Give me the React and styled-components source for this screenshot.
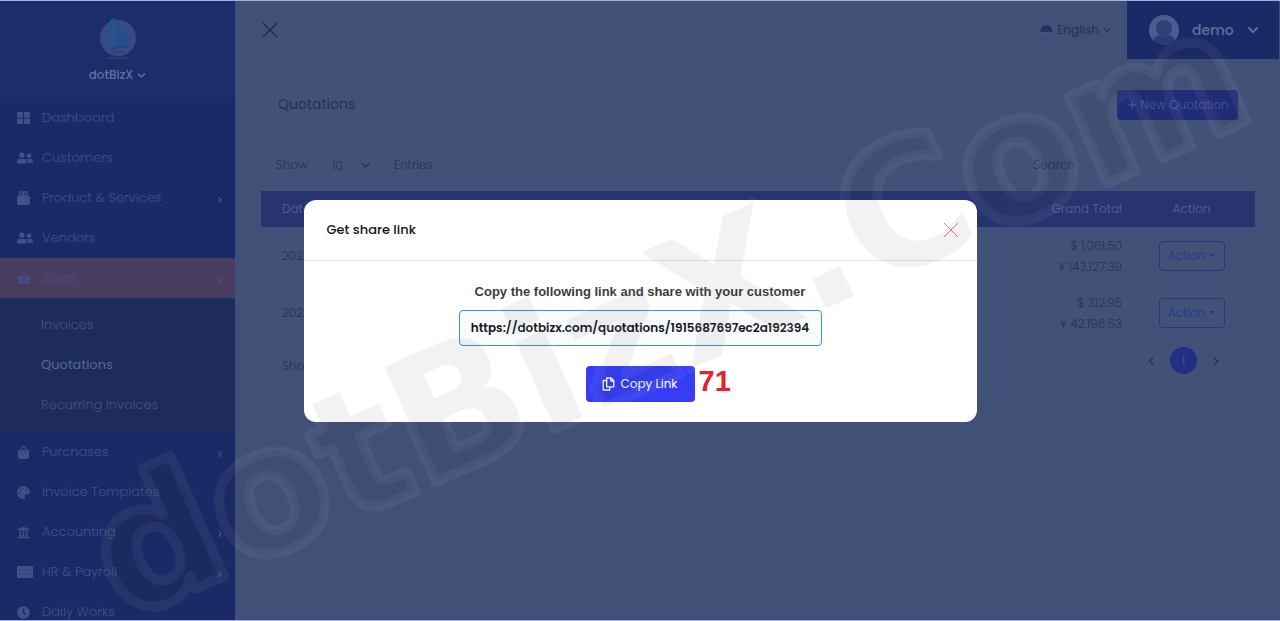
import React from 'react'
import styled, { createGlobalStyle, css } from 'styled-components'
import { FaUserFriends, FaShoppingBasket, FaPalette, FaUniversity, FaClock, FaChevronDown } from 'react-icons/fa'
import { FaBagShopping } from 'react-icons/fa6'
import { FiChevronRight, FiChevronDown, FiChevronLeft, FiPlus } from 'react-icons/fi'

const GlobalStyle = createGlobalStyle`
    * {
        box-sizing: border-box;
    }

    body {
        margin: 0;
        background: #405077;
        font-family: Poppins, Inter, "Liberation Sans", sans-serif;
        font-size: 13px;
        color: #25315c;
    }

    button, input, select {
        font: inherit;
        color: inherit;
    }

    a {
        color: inherit;
        text-decoration: none;
    }
`

const Page = styled.div`
    display: flex;
    height: 100vh;
    overflow: hidden;
    border-top: 1px solid #9db3e0;
    border-bottom: 1px solid #9db3e0;
`

const Sidebar = styled.aside`
    flex: 0 0 235px;
    background: #1b2a66;
    color: #415088;
`

const Brand = styled.div`
    display: flex;
    flex-direction: column;
    align-items: center;
    gap: 5px;
    height: 97px;
    padding-top: 17px;
    background: #1d2d6b;
`

const BrandButton = styled.button`
    display: flex;
    align-items: center;
    gap: 4px;
    padding: 0;
    border: 0;
    background: none;
    color: #5f71a0;
    font-size: 12px;
    font-weight: 500;
    line-height: 20px;
`

const NavLink = styled.a`
    display: flex;
    align-items: center;
    height: 40px;
    padding: 0 10px 0 17px;
    font-weight: 300;
    ${({ $active }) => $active && css`
        background: #493e60;
    `}
`

const NavIcon = styled.span`
    display: flex;
    width: 25px;
`

const NavArrow = styled.span`
    display: flex;
    margin-left: auto;
    padding-top: 4px;
`

const SubMenu = styled.div`
    padding: 7px 0;
    background: #1e2c5c;
`

const SubLink = styled.a`
    display: flex;
    align-items: center;
    height: 40px;
    padding-left: 41px;
    color: ${({ $active }) => $active ? '#56689a' : '#43537f'};
    font-weight: ${({ $active }) => $active ? 400 : 300};
`

const Main = styled.main`
    flex: 1;
    min-width: 0;
    margin-right: 1px;
`

const TopBar = styled.header`
    display: flex;
    align-items: center;
    height: 58px;
    padding-left: 27px;
`

const PlainButton = styled.button`
    display: flex;
    align-items: center;
    padding: 0;
    border: 0;
    background: none;
`

const Language = styled(PlainButton)`
    gap: 4px;
    margin-left: auto;
    margin-right: 16px;
    font-size: 12px;
`

const UserMenu = styled(PlainButton)`
    gap: 13px;
    align-self: stretch;
    width: 152px;
    padding-left: 22px;
    background: #1b2a66;
    color: #5f71a0;
    font-size: 14px;
    font-weight: 500;
`

const Card = styled.section`
    margin: 14px 24px 0 26px;
    padding-bottom: 18px;
    background: #415178;
`

const CardHeader = styled.div`
    display: flex;
    align-items: center;
    justify-content: space-between;
    height: 63px;
    padding: 0 17px;
`

const Title = styled.h1`
    margin: 0;
    font-size: 14px;
    font-weight: 400;
`

const NewButton = styled.button`
    display: flex;
    align-items: center;
    justify-content: center;
    gap: 2px;
    width: 121px;
    height: 30px;
    padding: 0;
    border: 0;
    border-radius: 4px;
    background: #202c78;
    color: #4b5b98;
    font-size: 12px;
    font-weight: 300;
`

const Controls = styled.div`
    display: flex;
    align-items: center;
    height: 55px;
    padding: 3px 16px 0 15px;
    font-size: 12px;
    font-weight: 300;
`

const PageSize = styled.label`
    display: flex;
    align-items: center;
    gap: 24px;
`

const SelectWrap = styled.span`
    display: grid;
    grid-template-columns: 38px;
    align-items: center;

    select, svg {
        grid-area: 1 / 1;
    }

    select {
        appearance: none;
        border: 0;
        padding: 0;
        background: none;
    }

    svg {
        justify-self: end;
        pointer-events: none;
    }
`

const Search = styled.label`
    display: flex;
    align-items: center;
    gap: 8px;
    margin-left: auto;

    input {
        width: 156px;
        height: 30px;
        border: 0;
        background: none;
    }
`

const Table = styled.table`
    width: 100%;
    border-collapse: collapse;
    font-size: 12px;
    font-weight: 300;

    th {
        height: 36px;
        padding: 0 6px;
        background: #27346f;
        color: #4b5b94;
        font-weight: 400;
        text-align: left;
    }

    td {
        height: 57px;
        padding: 0 6px;
        line-height: 21px;
    }

    th:first-child, td:first-child {
        padding-left: 21px;
    }

    th.total, td.total {
        text-align: right;
    }

    th.action, td.action {
        width: 127px;
        text-align: center;
    }
`

const ActionButton = styled.button`
    display: inline-flex;
    align-items: center;
    justify-content: center;
    gap: 4px;
    width: 66px;
    height: 30px;
    padding: 0;
    border: 1px solid #2a3874;
    border-radius: 4px;
    background: none;
    color: #27378a;

    &:after {
        content: "";
        border: 3px solid transparent;
        border-top-color: currentColor;
        border-bottom: 0;
    }
`

const TableFooter = styled.div`
    display: flex;
    align-items: start;
    justify-content: space-between;
    padding: 6px 33px 0 21px;
    font-size: 12px;
    font-weight: 300;

    p {
        margin: 0;
        padding-top: 8px;
        line-height: 22px;
    }
`

const Pager = styled.nav`
    display: flex;
    align-items: center;
    gap: 13px;
`

const PageNumber = styled.button`
    width: 27px;
    height: 27px;
    padding: 0;
    border: 0;
    border-radius: 50%;
    background: #222f82;
    color: #4a5aa0;
`

const Overlay = styled.div`
    position: fixed;
    inset: 0;
    display: flex;
    align-items: center;
    justify-content: center;
`

const Dialog = styled.div`
    width: 673px;
    max-width: 90%;
    border-radius: 12px;
    background: #fff;
    color: #16181d;
`

const DialogHeader = styled.div`
    display: flex;
    align-items: center;
    justify-content: space-between;
    height: 61px;
    padding: 0 18px 0 23px;
    border-bottom: 1px solid #dfe3ea;

    h2 {
        margin: 0;
        font-size: 13px;
        font-weight: 500;
    }
`

const DialogBody = styled.div`
    display: flex;
    flex-direction: column;
    align-items: center;
    padding: 22px 16px 20px;

    label {
        margin-bottom: 9px;
        color: #3b3b3d;
        font-family: "Liberation Sans", Arial, sans-serif;
        font-size: 13px;
        font-weight: 700;
        line-height: 18px;
    }
`

const LinkInput = styled.input`
    width: 363px;
    max-width: 100%;
    height: 36px;
    padding: 0 4px;
    border: 1px solid #3b8de0;
    border-radius: 4px;
    background: #f8fafc;
    font-size: 12px;
    font-weight: 600;
    text-align: center;
`

const CopyRow = styled.div`
    display: grid;
    grid-template-columns: 1fr auto 1fr;
    align-items: start;
    gap: 4px;
    margin-top: 20px;
`

const CopyButton = styled.button`
    grid-column: 2;
    display: flex;
    align-items: center;
    justify-content: center;
    gap: 5px;
    width: 109px;
    height: 36px;
    padding: 0;
    border: 0;
    border-radius: 4px;
    background: #353df5;
    color: #fff;
    font-size: 12px;
`

const Step = styled.strong`
    color: #e8202a;
    font-family: "Liberation Sans", Arial, sans-serif;
    font-size: 29px;
    line-height: 30px;
`

const Watermark = styled.svg`
    position: fixed;
    inset: 0;
    width: 100%;
    height: 100%;
    overflow: visible;
    pointer-events: none;

    text {
        fill: rgba(40, 40, 40, 0.06);
        stroke: rgba(255, 255, 255, 0.05);
        stroke-width: 10px;
        stroke-linejoin: round;
        font-family: "DejaVu Sans", sans-serif;
        font-size: 173px;
        font-weight: 700;
    }
`

const Logo = () => (
    <svg width="38" height="42" viewBox="0 0 38 42">
        <circle cx="19" cy="20" r="18" fill="#354c82" />
        <path d="M11 2l5-2v28l-5 1z" fill="#1f5590" />
        <path d="M18 7l3 2v19h-3zM22 8l3 2v18h-3zM26 15l3 2v11h-3z" fill="#254f8c" />
        <path d="M10 33q9-6 20-3M12 36q8-4 15-2" stroke="#273c76" fill="none" />
        <path d="M9 40h20" stroke="#2a3b74" strokeWidth="2" />
    </svg>
)

const Avatar = () => (
    <svg width="30" height="30" viewBox="0 0 30 30">
        <circle cx="15" cy="15" r="15" fill="#4b5d8e" />
        <circle cx="15" cy="13" r="8" fill="#2f4079" />
        <path d="M4 26q3-6 7-6 4 3 8 0 5 0 7 6-11 8-22 0z" fill="#2a3b73" />
    </svg>
)

const PanesIcon = () => (
    <svg width="13" height="12" viewBox="0 0 13 12" fill="currentColor">
        <path d="M1 0h5v5.4H0V1a1 1 0 0 1 1-1zM7 0h5a1 1 0 0 1 1 1v4.4H7zM0 6.6h6V12H1a1 1 0 0 1-1-1zM7 6.6h6V11a1 1 0 0 1-1 1H7z" />
    </svg>
)

const ProductIcon = () => (
    <svg width="13" height="14" viewBox="0 0 13 14" fill="currentColor">
        <path fillRule="evenodd" d="M2 4V2.5a2.2 2.2 0 0 1 4.4-.8 2.2 2.2 0 0 1 4.4.8V4L13 6.5V12a2 2 0 0 1-2 2H2a2 2 0 0 1-2-2V6.5zM3.3 4H5V2.5a.8.8 0 0 0-1.7 0zM7.6 4h1.8V2.5a.8.8 0 0 0-1.8 0z" />
    </svg>
)

const PayrollIcon = () => (
    <svg width="16" height="12" viewBox="0 0 16 12">
        <rect width="16" height="12" rx="1" fill="currentColor" />
        <path d="M2 4h12M2 8h3M7 8h2M11 8h3" stroke="#31407a" />
    </svg>
)

const CopyIcon = () => (
    <svg width="13" height="14" viewBox="0 0 13 14" fill="none" stroke="#fff" strokeWidth="1.3" strokeLinejoin="round">
        <path d="M4.7 1h4.5l2.6 2.6v6.2H4.7zM8.8 1v3h3M4.5 3.5H1.2V13h6.6v-3" />
    </svg>
)

const CloseIcon = ({ size, color, width }) => (
    <svg width={size} height={size} viewBox="0 0 16 16">
        <path d="M1 1l14 14M15 1L1 15" stroke={color} strokeWidth={width} />
    </svg>
)

const topLinks = [
    { name: 'Dashboard', icon: <PanesIcon /> },
    { name: 'Customers', icon: <FaUserFriends size={16} /> },
    { name: 'Product & Services', icon: <ProductIcon />, more: true },
    { name: 'Vendors', icon: <FaUserFriends size={16} /> },
]

const bottomLinks = [
    { name: 'Purchases', icon: <FaBagShopping size={13} />, more: true },
    { name: 'Invoice Templates', icon: <FaPalette size={13} /> },
    { name: 'Accounting', icon: <FaUniversity size={13} />, more: true },
    { name: 'HR & Payroll', icon: <PayrollIcon />, more: true },
    { name: 'Daily Works', icon: <FaClock size={13} /> },
]

const quotations = [
    { id: 1, date: '2023-10-12', usd: '$ 1,061.50', yen: '¥ 143,127.39' },
    { id: 2, date: '2023-10-10', usd: '$ 312.95', yen: '¥ 42,196.63' },
]

const renderLink = ({ name, icon, more }) => (
    <NavLink key={name} href="#">
        <NavIcon>{icon}</NavIcon>
        {name}
        {more && <NavArrow><FiChevronRight size={10} strokeWidth={3} /></NavArrow>}
    </NavLink>
)

const App = () => (
    <>
        <GlobalStyle />
        <Page>
            <Sidebar>
                <Brand>
                    <Logo />
                    <BrandButton>dotBizX <FaChevronDown size={9} /></BrandButton>
                </Brand>
                <nav>
                    {topLinks.map(renderLink)}
                    <NavLink href="#" $active>
                        <NavIcon><FaShoppingBasket size={14} /></NavIcon>
                        Sales
                        <NavArrow><FiChevronDown size={10} strokeWidth={3} /></NavArrow>
                    </NavLink>
                    <SubMenu>
                        <SubLink href="#">Invoices</SubLink>
                        <SubLink href="#" $active>Quotations</SubLink>
                        <SubLink href="#">Recurring Invoices</SubLink>
                    </SubMenu>
                    {bottomLinks.map(renderLink)}
                </nav>
            </Sidebar>
            <Main>
                <TopBar>
                    <PlainButton aria-label="Toggle menu">
                        <CloseIcon size={16} color="#222d50" width={1.5} />
                    </PlainButton>
                    <Language>
                        <svg width="13" height="13" viewBox="0 0 13 13">
                            <circle cx="6.5" cy="6.5" r="6" fill="#455484" />
                            <path d="M.5 7a6 6 0 0 1 12 0v1H.5z" fill="#25305d" />
                        </svg>
                        English
                        <FaChevronDown size={8} />
                    </Language>
                    <UserMenu>
                        <Avatar />
                        demo
                        <FaChevronDown size={12} />
                    </UserMenu>
                </TopBar>
                <Card>
                    <CardHeader>
                        <Title>Quotations</Title>
                        <NewButton><FiPlus size={12} /> New Quotation</NewButton>
                    </CardHeader>
                    <Controls>
                        <PageSize>
                            Show
                            <SelectWrap>
                                <select defaultValue="10">
                                    <option>10</option>
                                    <option>25</option>
                                </select>
                                <FaChevronDown size={9} />
                            </SelectWrap>
                            Entries
                        </PageSize>
                        <Search>Search <input type="text" /></Search>
                    </Controls>
                    <Table>
                        <thead>
                            <tr>
                                <th>Date</th>
                                <th className="total">Grand Total</th>
                                <th className="action">Action</th>
                            </tr>
                        </thead>
                        <tbody>
                            {quotations.map(quotation => (
                                <tr key={quotation.id}>
                                    <td>{quotation.date}</td>
                                    <td className="total">{quotation.usd}<br />{quotation.yen}</td>
                                    <td className="action">
                                        <ActionButton>Action</ActionButton>
                                    </td>
                                </tr>
                            ))}
                        </tbody>
                    </Table>
                    <TableFooter>
                        <p>Showing 1 to 2 of 2 Entries</p>
                        <Pager>
                            <PlainButton aria-label="Previous"><FiChevronLeft size={12} strokeWidth={3} /></PlainButton>
                            <PageNumber>1</PageNumber>
                            <PlainButton aria-label="Next"><FiChevronRight size={12} strokeWidth={3} /></PlainButton>
                        </Pager>
                    </TableFooter>
                </Card>
            </Main>
        </Page>
        <Overlay>
            <Dialog role="dialog" aria-labelledby="share-title">
                <DialogHeader>
                    <h2 id="share-title">Get share link</h2>
                    <PlainButton aria-label="Close"><CloseIcon size={16} color="#ee6b86" width={1} /></PlainButton>
                </DialogHeader>
                <DialogBody>
                    <label htmlFor="share-link">Copy the following link and share with your customer</label>
                    <LinkInput id="share-link" readOnly value="https://dotbizx.com/quotations/1915687697ec2a192394" />
                    <CopyRow>
                        <CopyButton><CopyIcon /> Copy Link</CopyButton>
                        <Step>71</Step>
                    </CopyRow>
                </DialogBody>
            </Dialog>
        </Overlay>
        <Watermark viewBox="0 0 1280 621" aria-hidden="true">
            <text transform="translate(124 621) rotate(-24)">dotBizX.Com</text>
        </Watermark>
    </>
)

export default App
